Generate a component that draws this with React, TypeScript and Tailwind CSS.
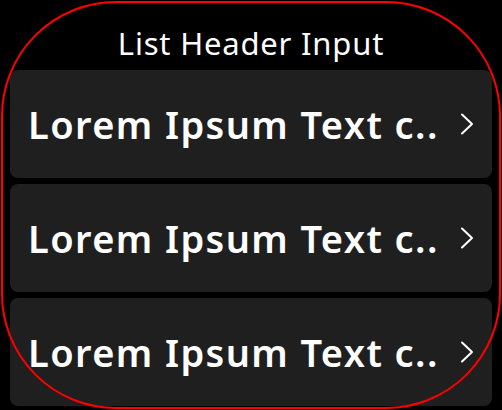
import React from "react";

const items = ["Lorem Ipsum Text c..", "Lorem Ipsum Text c..", "Lorem Ipsum Text c.."];

function Chevron() {
  return (
    <svg width="14" height="22" viewBox="0 0 14 22" fill="none">
      <path d="M2 1.5 L12 11 L2 20.5" stroke="white" strokeWidth="2" strokeLinecap="round" strokeLinejoin="round" />
    </svg>
  );
}

export default function App() {
  return (
    <div
      className="relative w-[502px] h-[410px] bg-black overflow-hidden"
      style={{ fontFamily: '"Noto Sans", sans-serif' }}
    >
      <div className="flex flex-col px-[10px]">
        <div className="h-[70px] flex items-center justify-center pt-[16px] text-white text-[31px] tracking-[0.8px] leading-none">
          List Header Input
        </div>
        <div className="flex flex-col gap-[6px]">
          {items.map((t, i) => (
            <div
              key={i}
              className="h-[108px] rounded-[8px] bg-[#1f1f1f] flex items-center justify-between pl-[18px] pr-[18px]"
            >
              <span className="text-white text-[38px] font-semibold tracking-[1.4px] leading-none">{t}</span>
              <Chevron />
            </div>
          ))}
        </div>
      </div>
      <div className="absolute left-[1px] top-[1px] w-[500px] h-[408px] border-2 border-[#ff0000] rounded-[115px] pointer-events-none" />
    </div>
  );
}
